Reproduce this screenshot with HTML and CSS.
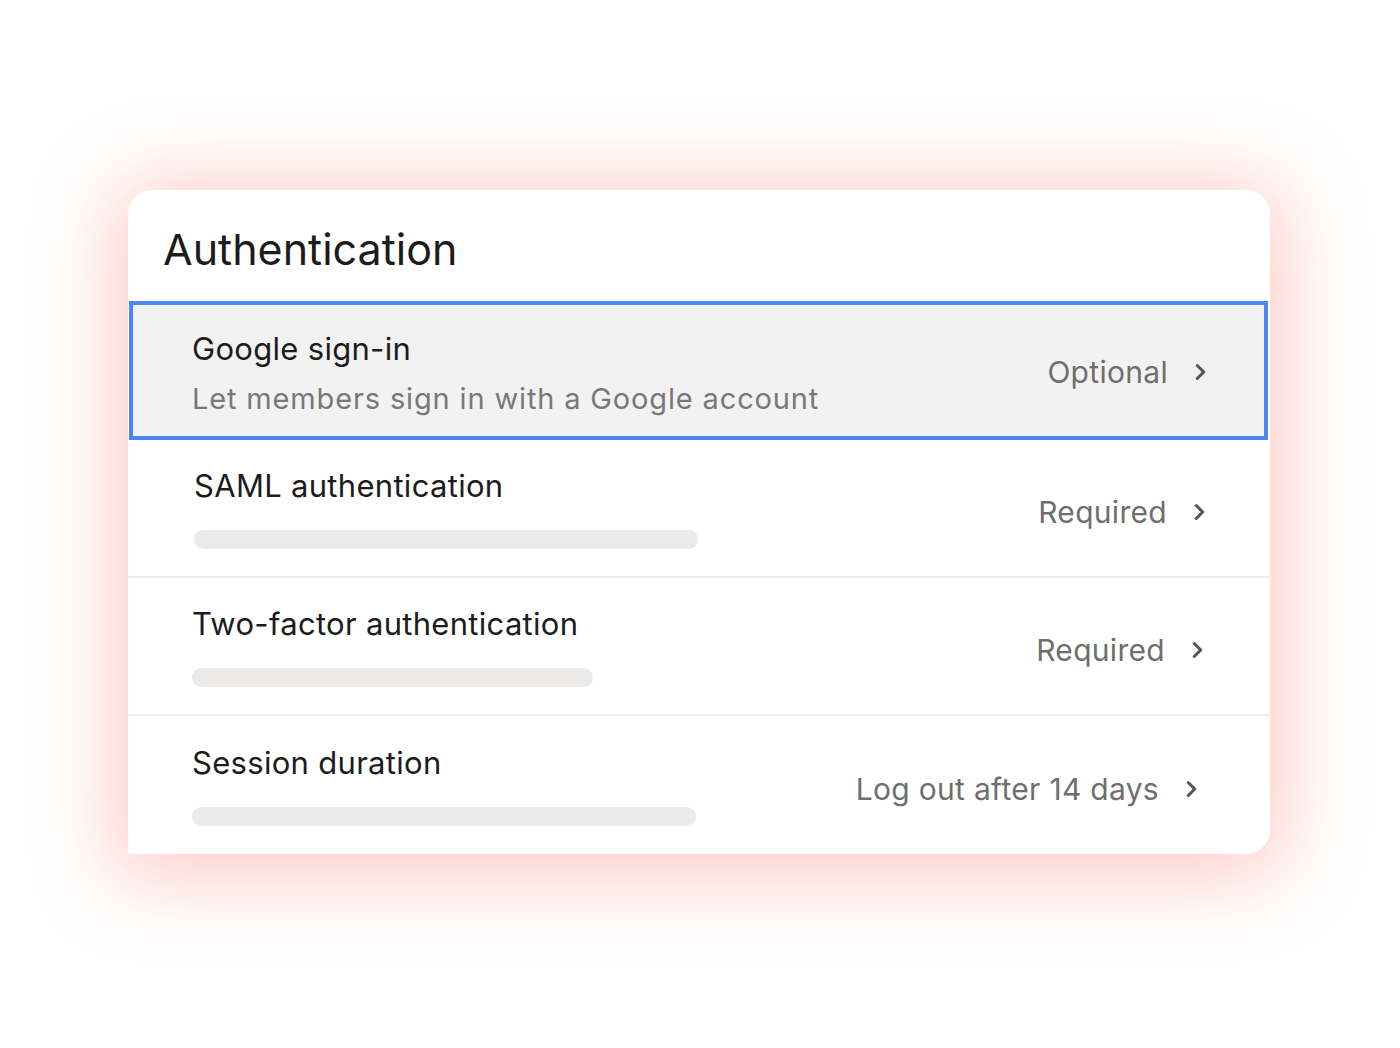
FILE: index.html
```html
<!DOCTYPE html>
<html lang="en">
<head>
    <meta charset="UTF-8">
    <meta name="viewport" content="width=device-width, initial-scale=1.0">
    <title>Authentication</title>
    <link rel="stylesheet" href="styles.css">
</head>
<body>
    <div class="auth-card">
        <h1>Authentication</h1>

        <div class="auth-row active">
            <div class="auth-info">
                <div class="auth-title">Google sign-in</div>
                <div class="auth-desc">Let members sign in with a Google account</div>
            </div>
            <div class="auth-value">
                Optional
                <svg class="chevron" viewBox="0 0 12 20"><path d="M3 4l6 6-6 6"/></svg>
            </div>
        </div>

        <div class="auth-row r2">
            <div class="auth-info">
                <div class="auth-title">SAML authentication</div>
                <div class="skeleton w-long"></div>
            </div>
            <div class="auth-value">
                Required
                <svg class="chevron" viewBox="0 0 12 20"><path d="M3 4l6 6-6 6"/></svg>
            </div>
        </div>

        <div class="auth-row r3">
            <div class="auth-info">
                <div class="auth-title">Two-factor authentication</div>
                <div class="skeleton w-short"></div>
            </div>
            <div class="auth-value">
                Required
                <svg class="chevron" viewBox="0 0 12 20"><path d="M3 4l6 6-6 6"/></svg>
            </div>
        </div>

        <div class="auth-row r4 last">
            <div class="auth-info">
                <div class="auth-title">Session duration</div>
                <div class="skeleton w-long"></div>
            </div>
            <div class="auth-value">
                Log out after 14 days
                <svg class="chevron" viewBox="0 0 12 20"><path d="M3 4l6 6-6 6"/></svg>
            </div>
        </div>
    </div>
</body>
</html>
```

FILE: styles.css
```css
body {
    font-family: Inter, "Noto Sans", sans-serif;
    background-color: #ffffff;
    margin: 0;
    padding: 190px 0 0 128px;
    height: 100vh;
    box-sizing: border-box;
}

.auth-card {
    width: 1142px;
    background: #ffffff;
    border-radius: 24px 24px 24px 2px;
    box-shadow: 0 8px 80px 14px rgba(255, 125, 110, 0.4);
    overflow: hidden;
}

h1 {
    margin: 0;
    height: 111px;
    box-sizing: border-box;
    padding: 33px 0 0 35px;
    font-size: 43px;
    font-weight: 400;
    color: #1c1c1c;
    letter-spacing: 0;
}

.auth-row {
    display: flex;
    align-items: center;
    justify-content: space-between;
    height: 138px;
    box-sizing: border-box;
    padding: 0 64px 0 66px;
    border-bottom: 2px solid #efeeee;
}

.auth-row.last {
    border-bottom: none;
}

.auth-row.active {
    height: 139px;
    background: #f3f2f2;
    border: 4px solid #4a87f3;
    margin: 0 2px 0 1px;
    padding: 0 57px 0 59px;
}

.auth-info {
    display: flex;
    flex-direction: column;
}

.auth-title {
    font-size: 31px;
    color: #1c1c1c;
    line-height: 36px;
    letter-spacing: 0.3px;
}

.auth-desc {
    font-size: 29px;
    color: #787878;
    line-height: 36px;
    margin-top: 14px;
    letter-spacing: 0.85px;
}

.active .auth-info {
    margin-top: 6px;
}

.skeleton {
    height: 19px;
    border-radius: 10px;
    background: #ebeae9;
    margin-top: 26px;
}

.w-long {
    width: 504px;
}

.w-short {
    width: 401px;
}

.r3 .auth-info,
.r4 .auth-info {
    margin-left: -2px;
}

.auth-value {
    display: flex;
    align-items: center;
    gap: 26px;
    font-size: 30px;
    color: #6e6e6e;
    margin-top: 8px;
    letter-spacing: 0.3px;
}

.active .auth-value {
    margin-top: 2px;
}

.r3 .auth-value {
    margin-right: 2px;
}

.r4 .auth-value {
    margin-right: 8px;
}

.chevron {
    width: 13px;
    height: 22px;
    fill: none;
    stroke: #555555;
    stroke-width: 2.8;
    stroke-linecap: round;
    stroke-linejoin: round;
}
```
